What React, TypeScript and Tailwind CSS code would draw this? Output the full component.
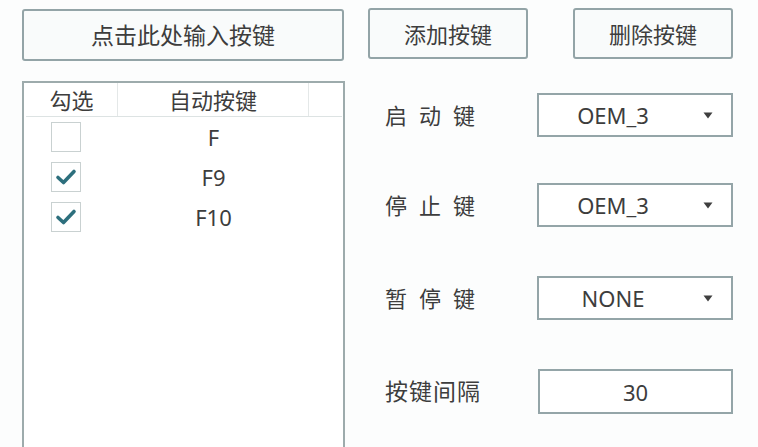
import React from "react";

const font = { fontFamily: '"Noto Sans", "Noto Sans CJK SC", sans-serif' };

function Check({ checked }: { checked: boolean }) {
  return (
    <div className="w-[30px] h-[30px] border-[1.5px] border-[#c9d1d1] bg-white flex items-center justify-center">
      {checked && (
        <svg width="22" height="18" viewBox="0 0 22 18">
          <path d="M3 9.5 L8.5 14.5 L19 3.5" fill="none" stroke="#2d6f7d" strokeWidth="3.6" strokeLinecap="round" strokeLinejoin="round" />
        </svg>
      )}
    </div>
  );
}

function Combo({ value }: { value: string }) {
  return (
    <div className="shrink-0 w-[196px] h-[44px] border-2 border-[#94a5a8] bg-white flex items-center">
      <div className="flex-1 text-center text-[22px] text-[#3d3d3d] leading-none pl-[2px]">{value}</div>
      <div className="w-[46px] flex items-center justify-center">
        <svg width="10" height="7" viewBox="0 0 10 7">
          <path d="M0.5 0.5 H9.5 L5 6.5 Z" fill="#3f3f3f" />
        </svg>
      </div>
    </div>
  );
}

export default function App() {
  const rows = [
    { k: "F", c: false },
    { k: "F9", c: true },
    { k: "F10", c: true },
  ];
  return (
    <div style={font} className="w-[758px] h-[447px] bg-[#fcfdfd] overflow-hidden flex pl-[22px] pt-[8px] text-[#3d3d3d]">
      {/* left column */}
      <div className="shrink-0 w-[323px] flex flex-col">
        <button className="shrink-0 mt-[1px] w-[322px] h-[52px] border-2 border-[#93a4a7] rounded-[3px] bg-[#f9fbfb] text-[23px] text-[#3d3d3d] flex items-center justify-center leading-none">
          点击此处输入按键
        </button>
        <div className="shrink-0 mt-[20px] w-[323px] h-[420px] border-2 border-[#9dabac] bg-white pl-[2px] pr-[1px]">
          <div className="flex h-[34px] border-b border-[#dde3e3] text-[22px] leading-none">
            <div className="w-[92px] flex items-center justify-center border-r border-[#e4e8e8]">勾选</div>
            <div className="w-[191px] flex items-center justify-center border-r border-[#e4e8e8]">自动按键</div>
            <div className="flex-1"></div>
          </div>
          {rows.map((r) => (
            <div key={r.k} className="flex h-[40px] items-center">
              <div className="w-[92px] pl-[25px]">
                <Check checked={r.c} />
              </div>
              <div className="w-[191px] text-center text-[22px] leading-none">{r.k}</div>
            </div>
          ))}
        </div>
      </div>
      {/* right column */}
      <div className="shrink-0 ml-[23px] flex flex-col">
        <div className="shrink-0 flex">
          <button className="w-[160px] h-[51px] border-2 border-[#93a4a7] rounded-[3px] bg-[#f9fbfb] text-[22px] text-[#3d3d3d] flex items-center justify-center leading-none">
            添加按键
          </button>
          <button className="ml-[45px] w-[160px] h-[51px] border-2 border-[#93a4a7] rounded-[3px] bg-[#f9fbfb] text-[22px] text-[#3d3d3d] flex items-center justify-center leading-none">
            删除按键
          </button>
        </div>
        <div className="shrink-0 mt-[34px] flex items-center">
          <div className="w-[169px] pl-[17px] text-[22px] tracking-[12px] leading-none">启动键</div>
          <Combo value="OEM_3" />
        </div>
        <div className="shrink-0 mt-[46px] flex items-center">
          <div className="w-[169px] pl-[17px] text-[22px] tracking-[12px] leading-none">停止键</div>
          <Combo value="OEM_3" />
        </div>
        <div className="shrink-0 mt-[49px] flex items-center">
          <div className="w-[169px] pl-[17px] text-[22px] tracking-[12px] leading-none">暂停键</div>
          <Combo value="NONE" />
        </div>
        <div className="shrink-0 mt-[49px] flex items-center">
          <div className="w-[170px] pl-[17px] text-[23px] tracking-[1px] leading-none">按键间隔</div>
          <div className="w-[195px] h-[45px] border-2 border-[#94a5a8] bg-white flex items-center justify-center text-[22px] leading-none">
            30
          </div>
        </div>
      </div>
    </div>
  );
}
